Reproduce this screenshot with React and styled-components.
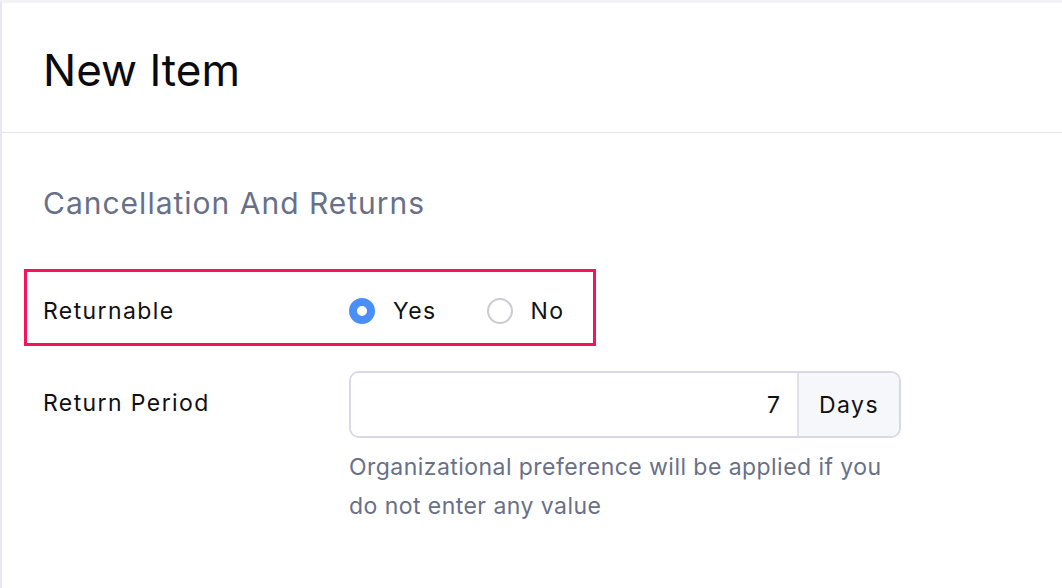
import React, { useState } from 'react'
import styled, { createGlobalStyle } from 'styled-components'

const GlobalStyle = createGlobalStyle`
  html, body {
    margin: 0;
    padding: 0;
    background: #ffffff;
  }
  body {
    font-family: Inter, 'Noto Sans', 'Liberation Sans', sans-serif;
    color: #111114;
  }
`

const Page = styled.div`
  min-height: 588px;
  box-sizing: border-box;
  border-top: 3px solid #f2f2f7;
  border-left: 2px solid #e8e8f3;
`

const Header = styled.header`
  height: 130px;
  box-sizing: border-box;
  display: flex;
  align-items: center;
  padding: 4px 0 0 41px;
  border-bottom: 1px solid #e4e4ee;
`

const Title = styled.h1`
  margin: 0;
  font-size: 44px;
  font-weight: 400;
  color: #0b0b0d;
`

const Body = styled.main`
  padding: 52px 0 0 22px;
`

const SectionTitle = styled.h2`
  margin: 0 0 48px 19px;
  font-size: 30px;
  font-weight: 400;
  line-height: 36px;
  letter-spacing: 1px;
  color: #687089;
`

const Highlight = styled.div`
  display: inline-flex;
  align-items: center;
  padding: 23px 28px 16px 16px;
  border: 3px solid #f5135a;
`

const Row = styled.div`
  display: flex;
  align-items: ${(p) => (p.$top ? 'flex-start' : 'center')};
  padding-left: ${(p) => p.$indent || 0}px;
`

const Label = styled.div`
  width: 306px;
  flex-shrink: 0;
  font-size: 23px;
  line-height: 32px;
  letter-spacing: 1.4px;
  color: #111114;
  padding-top: ${(p) => p.$offset || 0}px;
`

const Options = styled.div`
  display: flex;
  align-items: center;
  gap: 50px;
`

const Option = styled.label`
  display: flex;
  align-items: center;
  gap: 18px;
  font-size: 23px;
  line-height: 32px;
  letter-spacing: 1.4px;
  cursor: pointer;
`

const RadioDot = styled.span`
  width: 26px;
  height: 26px;
  box-sizing: border-box;
  border-radius: 50%;
  background: #fff;
  border: ${(p) => (p.$checked ? '8px solid #4a8ff8' : '2px solid #cbcbd4')};
`

const ReturnRow = styled(Row)`
  margin-top: 25px;
`

const Field = styled.div`
  display: flex;
  flex-direction: column;
`

const InputGroup = styled.div`
  display: flex;
  width: 552px;
  height: 67px;
  box-sizing: border-box;
  border: 2px solid #d9d8e6;
  border-radius: 10px;
  overflow: hidden;
`

const NumberInput = styled.input`
  flex: 1;
  min-width: 0;
  border: none;
  outline: none;
  padding: 0 17px 0 12px;
  text-align: right;
  font-family: inherit;
  font-size: 23px;
  color: #111114;
  background: #fff;
`

const Addon = styled.div`
  width: 100px;
  display: flex;
  align-items: center;
  justify-content: center;
  border-left: 2px solid #e2e1ec;
  background: #f6f7fa;
  font-size: 23px;
  letter-spacing: 1.4px;
  color: #111114;
`

const Help = styled.p`
  margin: 10px 0 0;
  width: 552px;
  font-size: 23px;
  line-height: 39px;
  letter-spacing: 0.45px;
  color: #687089;
`

export default function App() {
  const [returnable, setReturnable] = useState(true)
  const [period, setPeriod] = useState('7')

  return (
    <>
      <GlobalStyle />
      <Page>
        <Header>
          <Title>New Item</Title>
        </Header>
        <Body>
          <SectionTitle>Cancellation And Returns</SectionTitle>
          <Highlight>
            <Row>
              <Label>Returnable</Label>
              <Options>
                <Option onClick={() => setReturnable(true)}>
                  <RadioDot $checked={returnable} />
                  Yes
                </Option>
                <Option onClick={() => setReturnable(false)}>
                  <RadioDot $checked={!returnable} />
                  No
                </Option>
              </Options>
            </Row>
          </Highlight>
          <ReturnRow $top $indent={19}>
            <Label $offset={16}>Return Period</Label>
            <Field>
              <InputGroup>
                <NumberInput
                  value={period}
                  onChange={(e) => setPeriod(e.target.value)}
                />
                <Addon>Days</Addon>
              </InputGroup>
              <Help>
                Organizational preference will be applied if you do not enter
                any value
              </Help>
            </Field>
          </ReturnRow>
        </Body>
      </Page>
    </>
  )
}
